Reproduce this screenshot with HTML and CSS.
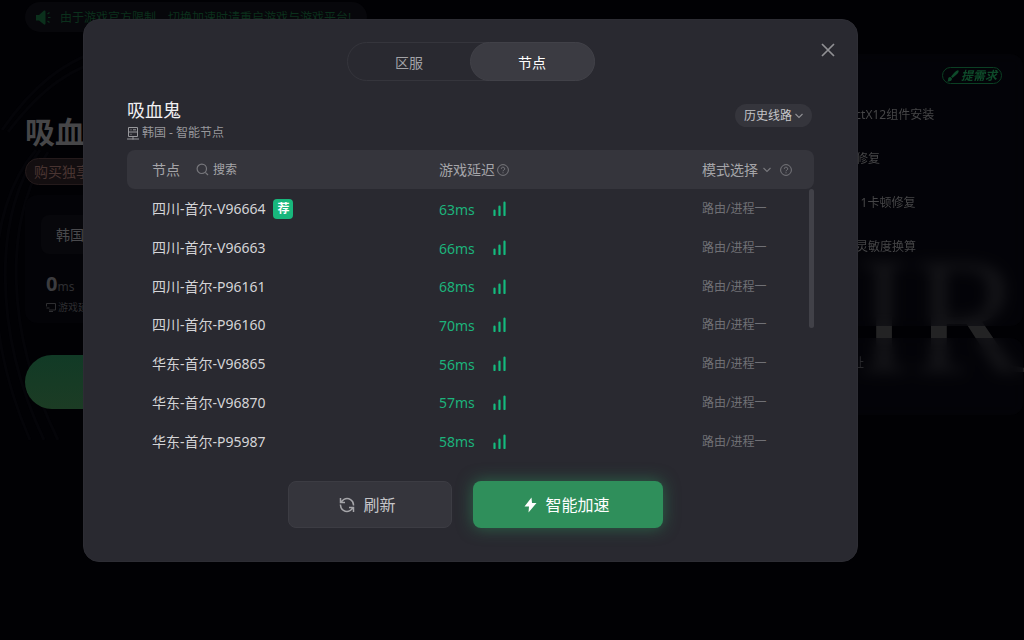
FILE: index.html
```html
<!DOCTYPE html>
<html lang="zh-CN">
<head>
<meta charset="utf-8">
<title>吸血鬼 - 节点选择</title>
<link rel="stylesheet" href="styles.css">
</head>
<body>
<svg class="sprite" aria-hidden="true">
  <symbol id="help" viewBox="0 0 12 12"><circle cx="6" cy="6" r="5.4" fill="none" stroke="currentColor"/><path d="M4.300 4.800a1.700 1.600 0 1 1 2.600 1.300C6.200 6.500 6 6.700 6 7.300M6 8.300v1" fill="none" stroke="currentColor"/></symbol>
  <symbol id="chevron" viewBox="0 0 8 6"><path d="M.5 1 4 4.400 7.500 1" fill="none" stroke="currentColor" stroke-width="1.100"/></symbol>
  <symbol id="signal" viewBox="0 0 13 15"><path d="M1.500 9.500v4.500M6.500 5.500v8.500M11.500 1.500v12.500" fill="none" stroke="currentColor" stroke-width="2.200" stroke-linecap="round"/></symbol>
</svg>

<div class="app">
  <div class="art" aria-hidden="true">IR</div>
  <svg class="swirl" viewBox="0 0 120 460" aria-hidden="true"><path d="M118 44C60 60 30 90 2 130M118 56C70 66 40 90 8 132M40 150C-6 210-8 330 44 440M48 152C4 220 4 330 58 440M36 150C-16 210-18 330 30 440"/></svg>
  <p class="notice">
    <svg width="15" height="15" viewBox="0 0 15 15" aria-hidden="true"><path d="M0 5h3l5-4.500q1.500-.5 1.500 1v12q0 1.500-1.500 1L3 10.500H0z" fill="currentColor"/><path d="m11.500 4 2-1.500M12 7.500h2.500M11.500 11l2 1.500" stroke="currentColor" stroke-width="1.200"/></svg>
    由于游戏官方限制，切换加速时请重启游戏与游戏平台!
  </p>
  <div class="columns">
    <main class="game">
      <h1>吸血鬼</h1>
      <a class="promo" href="#">购买独享线路</a>
      <section class="status">
        <div class="region">韩国</div>
        <div class="delay"><b>0</b>ms</div>
        <div class="delay-label"><svg width="10" height="9" viewBox="0 0 10 9" aria-hidden="true"><path d="M.5 3.500v-3M.5.5h9v6.500H3M3 8.500h4M.5 5h3" fill="none" stroke="currentColor"/></svg>游戏延迟</div>
      </section>
      <button class="start" type="button">加速</button>
    </main>
    <aside class="side">
      <section class="card tools">
        <button class="demand" type="button"><svg width="12" height="12" viewBox="0 0 12 12" aria-hidden="true"><path d="M11.500.5Q12.500 2 9 5L5.500 8 4 6.500 7 3Q10-.5 11.500.5M3.500 7 5 8.500Q5 12 0 11.500 1.500 10.500 1 9 1.500 6.500 3.500 7" fill="currentColor"/></svg>提需求</button>
        <ul>
          <li><a href="#">DirectX12组件安装</a></li>
          <li><a href="#">网络修复</a></li>
          <li><a href="#">Win11卡顿修复</a></li>
          <li><a href="#">鼠标灵敏度换算</a></li>
        </ul>
      </section>
      <section class="card links"><a href="#">官网地址</a></section>
    </aside>
  </div>
</div>

<div class="overlay">
  <div class="modal" role="dialog" aria-modal="true" aria-labelledby="title">
    <button class="close" type="button" aria-label="关闭"><svg width="14" height="14" viewBox="0 0 14 14"><path d="m1 1 12 12M13 1 1 13" stroke="currentColor" stroke-width="1.700"/></svg></button>
    <div class="tabs" role="tablist">
      <button type="button" role="tab" aria-selected="false">区服</button>
      <button class="active" type="button" role="tab" aria-selected="true">节点</button>
    </div>
    <header class="heading">
      <div>
        <h2 id="title">吸血鬼</h2>
        <p class="path"><svg width="12" height="13" viewBox="0 0 12 13" aria-hidden="true"><path d="M1.500.5h9v9h-9zM1.500 5h9M3.500 2.800h1M3.500 7.300h1M6 2.800h3M6 9.500v3M0 12h12" fill="none" stroke="currentColor"/></svg>韩国 - 智能节点</p>
      </div>
      <button class="history" type="button">历史线路<svg width="8" height="6"><use href="#chevron"/></svg></button>
    </header>
    <div class="nodes">
      <table>
        <thead>
          <tr>
            <th class="c-name"><span class="cell">节点<button class="search" type="button"><svg width="13" height="13" viewBox="0 0 13 13" aria-hidden="true"><circle cx="5.800" cy="5.800" r="4.700" fill="none" stroke="currentColor" stroke-width="1.200"/><path d="m9.300 9.300 2.700 2.700" stroke="currentColor" stroke-width="1.200"/></svg><span>搜索</span></button></span></th>
            <th class="c-delay"><span class="cell help">游戏延迟<svg width="12" height="12"><use href="#help"/></svg></span></th>
            <th class="c-mode"><span class="cell mode">模式选择<svg width="8" height="6"><use href="#chevron"/></svg><svg width="12" height="12"><use href="#help"/></svg></span></th>
          </tr>
        </thead>
        <tbody>
          <tr><td><span class="cell">四川-首尔-V96664<span class="tag">荐</span></span></td><td class="ms"><span class="cell">63ms<svg width="13" height="15"><use href="#signal"/></svg></span></td><td class="route">路由/进程一</td></tr>
          <tr><td>四川-首尔-V96663</td><td class="ms"><span class="cell">66ms<svg width="13" height="15"><use href="#signal"/></svg></span></td><td class="route">路由/进程一</td></tr>
          <tr><td>四川-首尔-P96161</td><td class="ms"><span class="cell">68ms<svg width="13" height="15"><use href="#signal"/></svg></span></td><td class="route">路由/进程一</td></tr>
          <tr><td>四川-首尔-P96160</td><td class="ms"><span class="cell">70ms<svg width="13" height="15"><use href="#signal"/></svg></span></td><td class="route">路由/进程一</td></tr>
          <tr><td>华东-首尔-V96865</td><td class="ms"><span class="cell">56ms<svg width="13" height="15"><use href="#signal"/></svg></span></td><td class="route">路由/进程一</td></tr>
          <tr><td>华东-首尔-V96870</td><td class="ms"><span class="cell">57ms<svg width="13" height="15"><use href="#signal"/></svg></span></td><td class="route">路由/进程一</td></tr>
          <tr><td>华东-首尔-P95987</td><td class="ms"><span class="cell">58ms<svg width="13" height="15"><use href="#signal"/></svg></span></td><td class="route">路由/进程一</td></tr>
        </tbody>
      </table>
      <div class="thumb"></div>
    </div>
    <footer class="actions">
      <button class="refresh" type="button"><svg width="16" height="16" viewBox="0 0 16 16" aria-hidden="true"><path d="M5 2.300A6.500 6.500 0 0 1 14.500 8.500M11 13.700A6.500 6.500 0 0 1 1.500 7.500M1.500 1v4.500H6M14.500 15v-4.500H10M2 5 5 2.300M14 11l-3 2.700" fill="none" stroke="currentColor" stroke-width="1.500"/></svg>刷新</button>
      <button class="boost" type="button"><svg width="13" height="16" viewBox="0 0 13 16" aria-hidden="true"><path d="M7.500.5.5 9.500H5L4.500 15.500 12.500 6H8z" fill="currentColor"/></svg>智能加速</button>
    </footer>
  </div>
</div>
</body>
</html>
```
FILE: styles.css
```css
* { box-sizing: border-box; }
body {
  margin: 0;
  min-height: 100vh;
  background: #010104;
  color: #d4d4d7;
  font: 14px/20px "Noto Sans", "Noto Sans CJK SC", sans-serif;
}
h1, h2, p, ul { margin: 0; padding: 0; }
ul { list-style: none; }
a { color: inherit; text-decoration: none; }
button {
  padding: 0;
  border: 0;
  background: none;
  color: inherit;
  font: inherit;
  cursor: pointer;
}
svg { flex: none; }
.sprite { position: absolute; width: 0; height: 0; }

/* Dimmed page behind the dialog */
.app {
  position: relative;
  min-height: 100vh;
  padding: 2px 1px 0 25px;
  overflow: hidden;
}
.art {
  position: absolute;
  right: 0;
  top: 223px;
  color: #232324;
  font: 168px/184px "Liberation Serif", serif;
}
.swirl {
  position: absolute;
  left: 0;
  top: 0;
  width: 120px;
  fill: none;
  stroke: #040408;
  stroke-width: 3;
}
.notice {
  position: relative;
  display: flex;
  align-items: center;
  gap: 9px;
  width: fit-content;
  height: 30px;
  padding: 1px 16px 0 11px;
  border-radius: 15px;
  background: #07070b;
  color: #0b301c;
  font-size: 12px;
}
.columns {
  position: relative;
  display: grid;
  grid-template-columns: minmax(0, 1fr) 222px;
  gap: 24px;
  margin-top: 22px;
}
.game { padding-top: 60px; }
.game h1 {
  color: #464648;
  font-size: 30px;
  line-height: 36px;
}
.promo {
  display: inline-block;
  margin-top: 8px;
  padding: 0 8px;
  border: 1px solid #241a1b;
  border-radius: 14px;
  background: #130e10;
  color: #493431;
  line-height: 25px;
}
.status {
  margin-top: 10px;
  padding: 20px 16px 8px;
  border-radius: 12px;
  background: #030307;
  color: #2e2e31;
}
.region {
  padding: 10px 15px 9px;
  border-radius: 8px;
  background: #07070b;
  color: #4a4a4d;
}
.delay {
  padding: 18px 5px 0;
  font-size: 12px;
  line-height: 24px;
}
.delay b {
  color: #3c3c3f;
  font-size: 20px;
}
.delay-label {
  display: flex;
  align-items: center;
  gap: 2px;
  padding: 0 5px;
  font-size: 10px;
  line-height: 16px;
}
.start {
  display: block;
  width: 340px;
  height: 54px;
  margin-top: 32px;
  border-radius: 27px;
  background: linear-gradient(#113a26, #1c3c24);
  color: #4a4a4d;
}
.side {
  display: flex;
  flex-direction: column;
  gap: 12px;
  color: #464648;
  font-size: 12px;
}
.card {
  border-radius: 12px;
  background: rgba(6, 6, 12, .5);
  backdrop-filter: blur(7px);
}
.tools {
  display: flex;
  flex-direction: column;
  height: 272px;
  padding: 13px 21px 0 31px;
}
.demand {
  display: flex;
  align-items: center;
  align-self: flex-end;
  gap: 2px;
  padding: 0 4px;
  border: 1px solid #0b3f23;
  border-radius: 9px;
  color: #0e4a2a;
  font-size: 12px;
  font-weight: bold;
  font-style: italic;
  line-height: 15px;
}
.tools ul {
  display: grid;
  gap: 24px;
  padding-top: 21px;
}
.links {
  min-height: 77px;
  padding: 15px;
  color: #28282b;
}

/* Node dialog */
.overlay {
  position: absolute;
  inset: 0;
  padding: 19px 166px 19px 83px;
}
.modal {
  position: relative;
  padding: 22px 43px 33px;
  border: 1px solid #2d2d34;
  border-radius: 16px;
  background: #292930;
}
.close {
  position: absolute;
  top: 22px;
  right: 21px;
  width: 16px;
  height: 16px;
  color: #909094;
  line-height: 0;
}
.tabs {
  display: grid;
  grid-template-columns: 1fr 1fr;
  width: 248px;
  height: 39px;
  margin: 0 auto;
  border: 1px solid #35353c;
  border-radius: 20px;
  color: #a3a3a7;
}
.tabs button {
  padding-top: 2px;
  border-radius: 20px;
}
.tabs .active {
  margin: -1px;
  border: 1px solid #414148;
  background: #3b3b42;
  color: #fff;
}
.heading {
  display: flex;
  justify-content: space-between;
  align-items: flex-start;
  margin: 17px 2px 7px 0;
}
.heading h2 {
  color: #f0f0f2;
  font-size: 18px;
  line-height: 24px;
  font-weight: 400;
}
.path {
  display: flex;
  align-items: center;
  gap: 3px;
  padding-top: 1px;
  color: #98989c;
  font-size: 12px;
}
.history {
  display: flex;
  align-items: center;
  gap: 3px;
  height: 23px;
  margin-top: 6px;
  padding: 0 9px;
  border-radius: 12px;
  background: #35353c;
  color: #c5c5c9;
  font-size: 12px;
}
.history svg { color: #909094; }
.nodes { position: relative; }
table {
  width: 100%;
  border-spacing: 0;
  table-layout: fixed;
}
th {
  height: 39px;
  padding: 0;
  background: #35353c;
  color: #a5a5a9;
  font-weight: 400;
  text-align: left;
}
th:first-child {
  padding-left: 25px;
  border-radius: 8px 0 0 8px;
}
th:last-child { border-radius: 0 8px 8px 0; }
.c-name { width: 45.4%; }
.c-delay { width: 38.3%; }
tbody { height: 271px; }
td {
  height: 38px;
  padding: 2px 0 0;
  white-space: nowrap;
}
td:first-child { padding-left: 25px; }
.cell {
  display: flex;
  align-items: center;
  gap: 8px;
}
.help { gap: 2px; }
.mode { gap: 5px; }
.mode svg + svg { margin-left: 4px; }
th svg { color: #77777c; }
.search {
  display: flex;
  align-items: center;
  gap: 4px;
  margin-left: 8px;
  font-size: 12px;
}
.tag {
  width: 20px;
  border-radius: 4px;
  background: #18b77c;
  color: #fff;
  font-size: 12px;
  font-weight: bold;
  text-align: center;
}
.ms {
  padding-top: 3px;
  color: #1cb37b;
}
.ms .cell { gap: 18px; }
.ms svg {
  margin-bottom: 2px;
  color: #14ba7d;
}
.route {
  color: #707075;
  font-size: 12px;
}
.thumb {
  position: absolute;
  top: 39px;
  right: 0;
  width: 5px;
  height: 139px;
  border-radius: 3px;
  background: #414148;
}
.actions {
  display: flex;
  justify-content: center;
  gap: 21px;
  margin-top: 21px;
  padding-left: 10px;
}
.actions button {
  display: flex;
  align-items: center;
  justify-content: center;
  gap: 8px;
  height: 47px;
  border-radius: 8px;
  font-size: 16px;
}
.actions .refresh {
  width: 164px;
  padding-right: 5px;
  border: 1px solid #3c3c43;
  background: #35353c;
  color: #c5c5c9;
}
.refresh svg { color: #a5a5a9; }
.actions .boost {
  width: 190px;
  padding-right: 2px;
  background: #2f8f5b;
  box-shadow: 0 0 16px rgba(47, 143, 91, .6);
  color: #fff;
}
```
